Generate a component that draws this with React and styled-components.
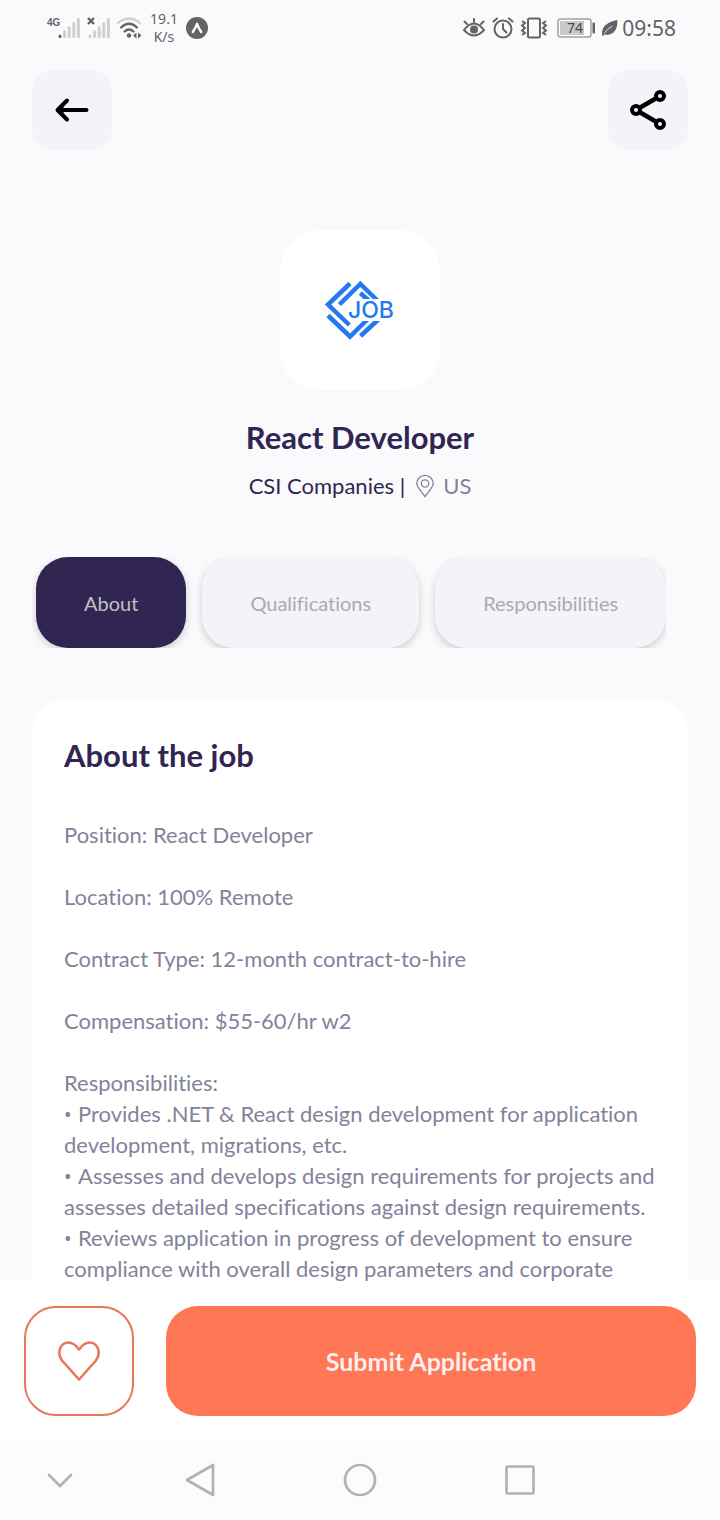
import React from "react";
import styled, { createGlobalStyle } from "styled-components";

const GlobalStyle = createGlobalStyle`
  *, *::before, *::after { box-sizing: border-box; }
  body { margin: 0; background: #fafafc; font-family: Lato, "Noto Sans", sans-serif; font-variant-ligatures: none; }
  button { font: inherit; font-variant-ligatures: none; border: 0; padding: 0; cursor: pointer; }
  h1, h2, p { margin: 0; }
`;

const Screen = styled.div`
  display: flex;
  flex-direction: column;
  height: 100vh;
  background: #fafafc;
`;

const StatusBar = styled.div`
  display: flex;
  align-items: center;
  justify-content: space-between;
  height: 56px;
  flex: none;
  padding: 0 44px;
  color: #636363;
`;

const StatusGroup = styled.div`
  display: flex;
  align-items: center;
  gap: ${(p) => p.$gap}px;
`;

const Speed = styled.div`
  display: flex;
  flex-direction: column;
  align-items: center;
  width: 28px;
  font: 14px/18px "Noto Sans", sans-serif;
`;

const Clock = styled.time`
  font: 21px/28px "Noto Sans", sans-serif;
`;

const Header = styled.header`
  display: flex;
  justify-content: space-between;
  flex: none;
  padding: 14px 32px 0;
`;

const IconButton = styled.button`
  display: grid;
  place-items: center;
  width: 80px;
  height: 80px;
  border-radius: 20px;
  background: #f3f4f8;
`;

const Content = styled.main`
  flex: 1;
  min-height: 0;
  overflow-y: auto;
  scrollbar-width: none;
  padding: 80px 32px 0;
`;

const Company = styled.section`
  display: flex;
  flex-direction: column;
  align-items: center;
`;

const LogoCard = styled.div`
  display: grid;
  place-items: center;
  width: 160px;
  height: 160px;
  border-radius: 40px;
  background: #fff;
`;

const JobTitle = styled.h1`
  margin-top: 27px;
  font-size: 31px;
  line-height: 40px;
  font-weight: 700;
  color: #312651;
`;

const CompanyLine = styled.div`
  display: flex;
  align-items: center;
  margin-top: 13px;
  font-size: 22px;
  line-height: 32px;
  color: #312651;
`;

const Location = styled.span`
  display: flex;
  align-items: center;
  gap: 8px;
  margin-left: 10px;
  color: #83829a;
`;

const Tabs = styled.div`
  display: flex;
  gap: 16px;
  width: fit-content;
  max-width: 100%;
  margin-top: 55px;
  padding-left: 4px;
  overflow: hidden;
`;

const Tab = styled.button`
  flex: none;
  height: 91px;
  padding: 0 48px;
  border-radius: 32px;
  background: ${(p) => (p.$active ? "#312651" : "#f3f4f8")};
  color: ${(p) => (p.$active ? "#c1c0c8" : "#aaa9b8")};
  && { font-size: 20px; line-height: 24px; }
  box-shadow: 0 3px 8px rgba(0, 0, 0, 0.18);
`;

const Card = styled.article`
  margin-top: 52px;
  padding: 35px 24px 35px 32px;
  border-radius: 32px;
  background: #fff;
`;

const CardTitle = styled.h2`
  font-size: 31px;
  line-height: 40px;
  color: #312651;
`;

const Description = styled.div`
  margin-top: 44px;
  font-size: 22px;
  line-height: 31px;
  color: #83829a;
`;

const Fact = styled.p`
  margin-bottom: 31px;
`;

const Bullet = styled.span`
  display: inline-block;
  width: 14px;
  font-family: "Noto Sans", sans-serif;
  font-size: 20px;
  line-height: 24px;
`;

const Footer = styled.footer`
  display: flex;
  gap: 32px;
  flex: none;
  padding: 25px 24px 24px;
  background: #fff;
`;

const LikeButton = styled.button`
  display: grid;
  place-items: center;
  flex: none;
  width: 110px;
  height: 110px;
  && { border: 2px solid #e8775a; }
  border-radius: 32px;
  background: #fff;
`;

const SubmitButton = styled.button`
  flex: 1;
  height: 110px;
  border-radius: 32px;
  background: #ff7754;
  && { font-size: 25px; font-weight: 700; }
  color: #fceeee;
`;

const SystemNav = styled.nav`
  display: grid;
  grid-template-columns: 3fr 4fr 4fr 4fr 3fr;
  flex: none;
  height: 80px;
  background: #fcfcfc;
`;

const NavButton = styled.button`
  display: grid;
  place-items: center;
  background: none;
`;

const bars = [0, 1, 2, 3, 4];

const Signal = ({ label, missing }) => (
  <svg width={missing ? 24 : 36} height="28" viewBox={missing ? "12 0 24 28" : "0 0 36 28"} role="img" aria-label={label}>
    {bars.map((i) => (
      <path
        key={i}
        d={`M${16 + i * 4.6} 22.5V${22 - i * 4.2}`}
        stroke={i === 0 && !missing ? "#636363" : "#cfcfd1"}
        strokeWidth="3"
        strokeLinecap="round"
      />
    ))}
    {missing ? (
      <path d="M14 4l6 6M20 4l-6 6" stroke="#636363" strokeWidth="2.4" />
    ) : (
      <text x="3" y="12" fontFamily="Liberation Sans, sans-serif" fontWeight="700" fontSize="10" fill="#636363">4G</text>
    )}
  </svg>
);

const Wifi = () => (
  <svg width="26" height="24" viewBox="0 0 26 24" fill="none" strokeWidth="2.2" strokeLinecap="round" role="img" aria-label="Wi-Fi">
    <path d="M2 7Q13-2 24 7" stroke="#cfcfd1" />
    <path d="M5 11.5Q13 4 21 11.5M8.5 15.5Q13 11.500 17.500 15.500" stroke="#636363" />
    <circle cx="13" cy="19.500" r="2.200" fill="#636363" />
    <path d="M20.500 16.500v6l-3.500-3zM22 16.500v6l3.500-3z" fill="#636363" />
  </svg>
);

const AppBadge = () => (
  <svg width="22" height="22" viewBox="0 0 22 22" aria-hidden="true">
    <circle cx="11" cy="11" r="11" fill="#636363" />
    <path d="M6.800 15Q9.800 10.500 11 6.800Q12.200 10.500 15.200 15" fill="none" stroke="#fff" strokeWidth="2.400" strokeLinecap="round" strokeLinejoin="round" />
  </svg>
);

const Eye = () => (
  <svg width="24" height="22" viewBox="0 0 24 22" fill="none" stroke="#636363" strokeWidth="2" strokeLinecap="round" aria-hidden="true">
    <path d="M2 13Q12 0 22 13Q12 24 2 13zM12 5V2M5 7L2.500 4.500M19 7l2.500-2.500" />
    <circle cx="12" cy="12.500" r="4" fill="#636363" stroke="none" />
  </svg>
);

const Alarm = () => (
  <svg width="22" height="22" viewBox="0 0 22 22" fill="none" stroke="#636363" strokeWidth="2" strokeLinecap="round" aria-hidden="true">
    <circle cx="11" cy="12" r="8.500" />
    <path d="M11 7v5l3.500 3.500M1.500 4.500l3.500-3M20.500 4.500l-3.500-3" />
  </svg>
);

const Vibrate = () => (
  <svg width="28" height="22" viewBox="0 0 28 22" fill="none" stroke="#636363" strokeWidth="2" aria-hidden="true">
    <rect x="8" y="1.500" width="12" height="19" rx="1.500" />
    <path d="M2 4l3 2-3 2.500 3 2.500-3 2.500 3 2.500-3 2M26 4l-3 2 3 2.500-3 2.500 3 2.500-3 2.500 3 2" />
  </svg>
);

const Battery = () => (
  <svg width="42" height="20" viewBox="-3 0 42 20" role="img" aria-label="Battery 74 percent">
    <rect x="1" y="1" width="33" height="18" rx="2.500" fill="#fff" stroke="#a0a0a2" strokeWidth="1.500" />
    <rect x="3" y="3" width="24" height="14" fill="#c8c8ca" />
    <rect x="35.500" y="4.500" width="2.500" height="11" rx="1" fill="#636363" />
    <text x="18" y="15" textAnchor="middle" fontFamily="Noto Sans, sans-serif" fontSize="14" fill="#484848">74</text>
  </svg>
);

const Leaf = () => (
  <svg width="16" height="18" viewBox="0 0 16 18" aria-hidden="true">
    <path d="M15.500 1Q15.500 14 7.500 15.500Q4 16.200 2.800 15.200L1 17L0 16Q-1 4 15.500 1z" fill="#636363" />
    <path d="M2 14.500Q5 10 10.500 7" fill="none" stroke="#fafafc" strokeWidth="0.800" />
  </svg>
);

const BackArrow = () => (
  <svg width="40" height="40" viewBox="0 0 40 40" fill="none" stroke="#000" strokeWidth="4" strokeLinecap="round" strokeLinejoin="round" aria-hidden="true">
    <path d="M34.500 20H6M15 10.500L5.500 20L15 29.500" />
    <path d="M6 20L11 15.500V24.500z" fill="#000" strokeWidth="1" />
  </svg>
);

const ShareIcon = () => (
  <svg width="40" height="44" viewBox="0 0 40 44" fill="none" stroke="#000" strokeWidth="4" aria-hidden="true">
    <path d="M8 22L32 8M8 22l24 14" strokeWidth="4.500" />
    <g fill="#f3f4f8">
      <circle cx="8" cy="22" r="4" />
      <circle cx="32" cy="8" r="4" />
      <circle cx="32" cy="36" r="4" />
    </g>
  </svg>
);

const JobLogo = () => (
  <svg width="80" height="70" viewBox="0 0 80 70" role="img" aria-label="JOB">
    <g fill="none" stroke="#2478f0" strokeWidth="4.500">
      <path d="M30 8.500L8 29.500L29.300 50" />
      <path d="M19.500 29.500L40.300 9L58 26" />
      <path d="M8 40.500L30 61.500L50 42" />
      <path d="M40.300 18l10 9M40.500 61L60 43" />
    </g>
    <path d="M29 24H80V46H29z" fill="#fff" />
    <text x="28" y="43" fontFamily="Inter, sans-serif" fontSize="23" fontWeight="500" fill="#2478f0">JOB</text>
  </svg>
);

const Pin = () => (
  <svg width="20" height="24" viewBox="0 0 20 24" fill="none" stroke="#83829a" strokeWidth="1.300" aria-hidden="true">
    <path d="M10 22.500Q2 13 1.800 9.500a8.200 8.200 0 0 1 16.400 0Q18 13 10 22.500z" />
    <circle cx="10" cy="9.500" r="3.700" />
  </svg>
);

const Heart = () => (
  <svg width="44" height="42" viewBox="0 0 44 42" fill="none" stroke="#e8775a" strokeWidth="2.600" strokeLinejoin="round" aria-hidden="true">
    <path d="M22 39.500L5 20.500C-1 12 4 2.500 11.500 2.500Q17 2.500 22 9.500Q27 2.500 32.500 2.500C40 2.500 45 12 39 20.500z" />
  </svg>
);

const NavIcon = ({ d, children }) => (
  <svg width="36" height="36" viewBox="0 0 36 36" fill="none" stroke="#b2b2b2" strokeWidth="2.700" strokeLinecap="round" strokeLinejoin="round" aria-hidden="true">
    {d && <path d={d} />}
    {children}
  </svg>
);

const tabs = ["About", "Qualifications", "Responsibilities"];

const facts = [
  "Position: React Developer",
  "Location: 100% Remote",
  "Contract Type: 12-month contract-to-hire",
  "Compensation: $55-60/hr w2",
];

const duties = [
  "Provides .NET & React design development for application development, migrations, etc.",
  "Assesses and develops design requirements for projects and assesses detailed specifications against design requirements.",
  "Reviews application in progress of development to ensure compliance with overall design parameters and corporate",
];

export default function App() {
  return (
    <Screen>
      <GlobalStyle />
      <StatusBar>
        <StatusGroup $gap={8}>
          <StatusGroup $gap={6}>
            <Signal label="4G signal" />
            <Signal label="No SIM signal" missing />
            <Wifi />
          </StatusGroup>
          <Speed><span>19.1</span><span>K/s</span></Speed>
          <AppBadge />
        </StatusGroup>
        <StatusGroup $gap={6}>
          <Eye />
          <Alarm />
          <Vibrate />
          <Battery />
          <StatusGroup $gap={4}>
            <Leaf />
            <Clock>09:58</Clock>
          </StatusGroup>
        </StatusGroup>
      </StatusBar>
      <Header>
        <IconButton aria-label="Back"><BackArrow /></IconButton>
        <IconButton aria-label="Share"><ShareIcon /></IconButton>
      </Header>
      <Content>
        <Company>
          <LogoCard><JobLogo /></LogoCard>
          <JobTitle>React Developer</JobTitle>
          <CompanyLine>
            <span>CSI Companies |</span>
            <Location><Pin />US</Location>
          </CompanyLine>
        </Company>
        <Tabs role="tablist">
          {tabs.map((name, i) => (
            <Tab key={name} role="tab" aria-selected={i === 0} $active={i === 0}>{name}</Tab>
          ))}
        </Tabs>
        <Card>
          <CardTitle>About the job</CardTitle>
          <Description>
            {facts.map((fact) => <Fact key={fact}>{fact}</Fact>)}
            <p>Responsibilities:</p>
            {duties.map((duty) => (
              <p key={duty}><Bullet>•</Bullet>{duty}</p>
            ))}
          </Description>
        </Card>
      </Content>
      <Footer>
        <LikeButton aria-label="Save job"><Heart /></LikeButton>
        <SubmitButton>Submit Application</SubmitButton>
      </Footer>
      <SystemNav aria-label="System">
        <NavButton aria-label="Hide"><NavIcon d="M7 13l11 11 11-11" /></NavButton>
        <NavButton aria-label="Back"><NavIcon d="M31 3v30L5 18z" /></NavButton>
        <NavButton aria-label="Home"><NavIcon><circle cx="18" cy="18" r="15" /></NavIcon></NavButton>
        <NavButton aria-label="Recent apps"><NavIcon><rect x="4.500" y="4.500" width="27" height="27" rx="1" /></NavIcon></NavButton>
      </SystemNav>
    </Screen>
  );
}
